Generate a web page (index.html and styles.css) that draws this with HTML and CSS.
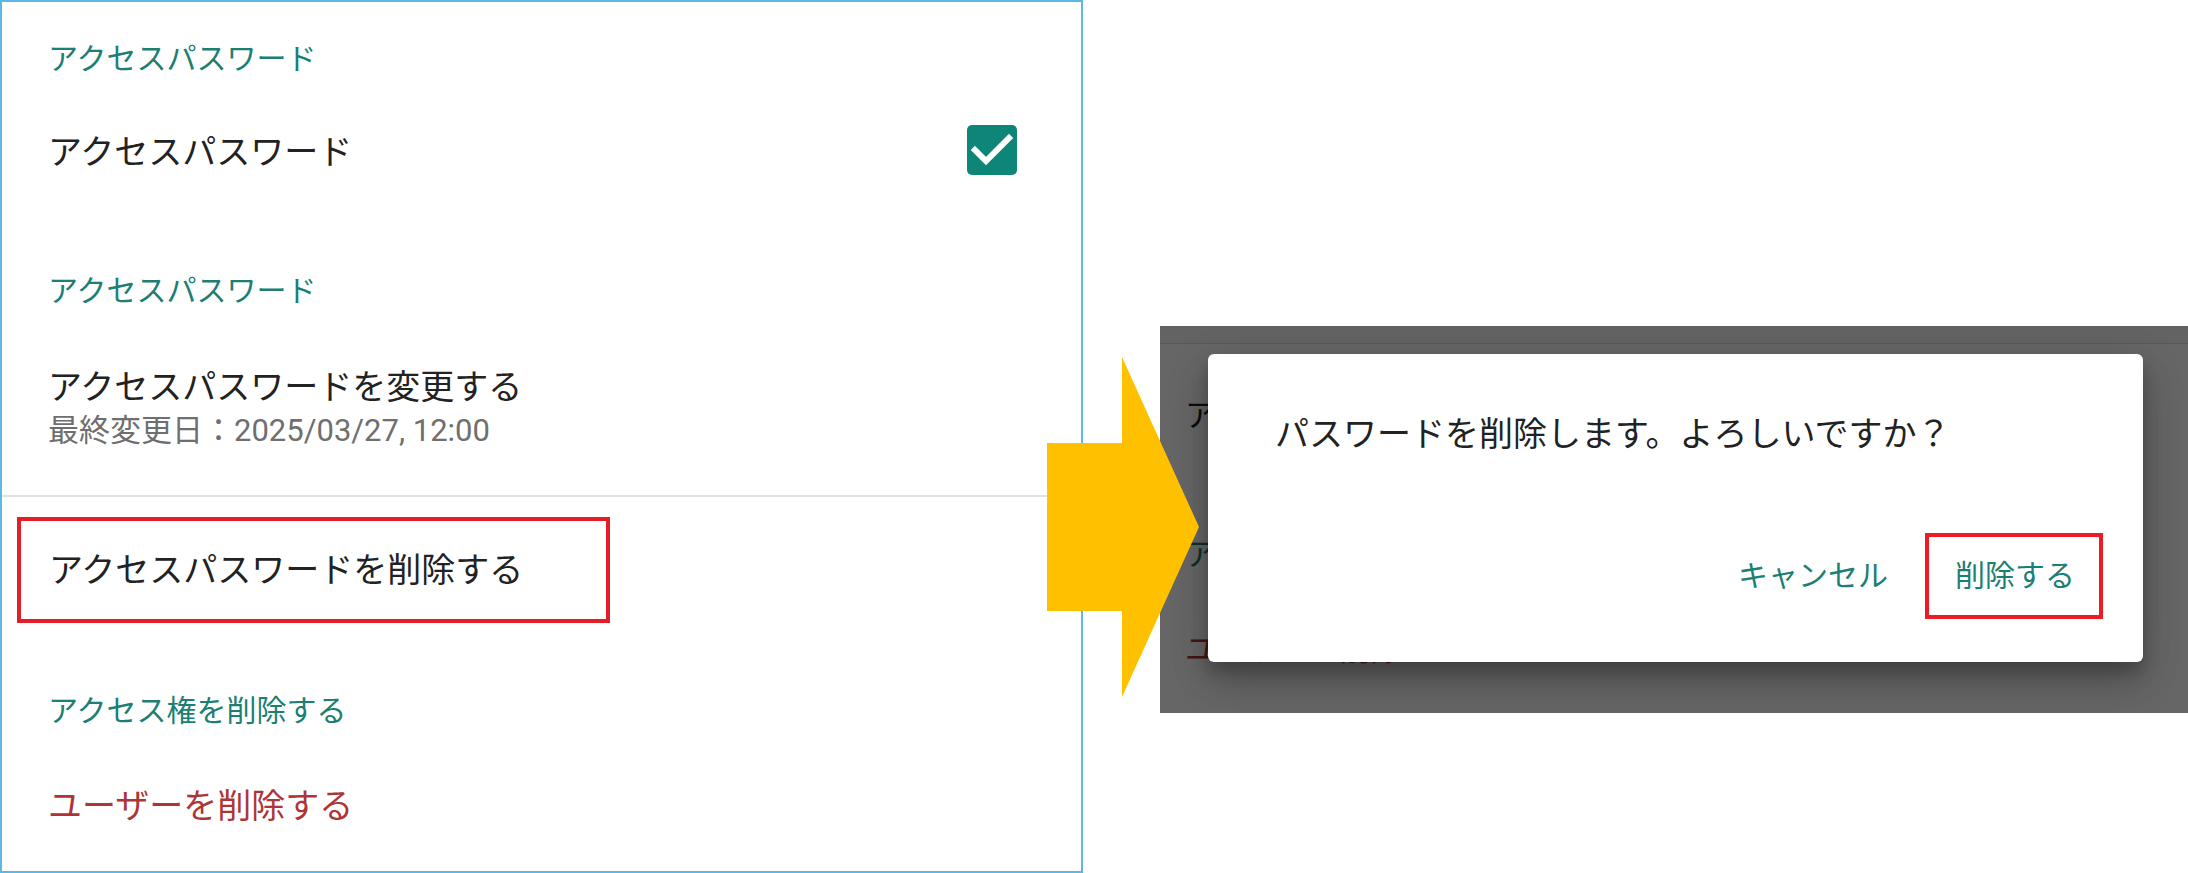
FILE: index.html
```html
<!DOCTYPE html>
<html lang="ja">
<head>
  <meta charset="UTF-8">
  <meta name="viewport" content="width=device-width, initial-scale=1.0">
  <title>アクセスパスワード</title>
  <link rel="stylesheet" href="styles.css">
</head>
<body>
  <div class="page">

    <section class="settings">
      <div class="category cat-first">アクセスパスワード</div>
      <div class="pref pref-switch">
        <span class="pref-title">アクセスパスワード</span>
        <span class="checkbox">
          <svg viewBox="0 0 50 50" width="50" height="50">
            <polyline points="8,25 19,36 42,13" fill="none" stroke="#fff" stroke-width="6" stroke-linecap="square"/>
          </svg>
        </span>
      </div>

      <div class="category cat-second">アクセスパスワード</div>
      <div class="pref pref-change">
        <div class="pref-title">アクセスパスワードを変更する</div>
        <div class="pref-summary">最終変更日：2025/03/27, 12:00</div>
      </div>

      <hr class="divider">

      <div class="pref pref-marked">アクセスパスワードを削除する</div>

      <div class="category cat-third">アクセス権を削除する</div>
      <div class="pref pref-danger">ユーザーを削除する</div>
    </section>

    <!-- 矢印 -->
    <div class="arrow">
      <svg viewBox="0 0 152 340" width="152" height="340">
        <polygon points="0,86 75,86 75,0 152,170 75,340 75,254 0,254" fill="#ffc000"/>
      </svg>
    </div>

    <div class="preview">
      <div class="screen">
        <div class="screen-bar"></div>
        <div class="screen-list">
          <div class="screen-item item-black">アクセスパスワードを削除する</div>
          <div class="screen-item item-teal">アクセス権を削除する</div>
          <div class="screen-item item-red">ユーザーを削除する</div>
        </div>

        <div class="dialog">
          <p class="dialog-msg">パスワードを削除します。よろしいですか？</p>
          <div class="dialog-actions">
            <button class="btn btn-cancel">キャンセル</button>
            <button class="btn btn-delete">削除する</button>
          </div>
        </div>
      </div>
    </div>

  </div>
</body>
</html>
```

FILE: styles.css
```css
body {
  margin: 0;
  background-color: #fff;
  font-family: Roboto, "Noto Sans CJK JP", sans-serif;
  color: #222;
  overflow: hidden;
}
.page {
  position: relative;
  display: flex;
  align-items: flex-start;
  width: 2188px;
  height: 873px;
}

/* 左: 設定画面 */
.settings {
  flex: none;
  width: 1083px;
  height: 873px;
  box-sizing: border-box;
  border: 2px solid #5cb8e6;
}
.category {
  padding-left: 46px;
  font-size: 30px;
  line-height: 40px;
  color: #1b7f73;
}
.cat-first {
  padding-top: 37px;
  padding-bottom: 21px;
}
.cat-second {
  padding-top: 71px;
}
.cat-third {
  padding-top: 68px;
}
.pref {
  padding-left: 46px;
  font-size: 34px;
  line-height: 46px;
}
.pref-switch {
  height: 100px;
  display: flex;
  align-items: center;
  justify-content: space-between;
  padding-right: 64px;
}
.pref-switch .pref-title {
  margin-top: 4px;
}
.checkbox {
  width: 50px;
  height: 50px;
  border-radius: 5px;
  background-color: #0d8677;
  display: flex;
}
.pref-change {
  padding-top: 53px;
  padding-bottom: 43px;
}
.pref-summary {
  font-size: 31px;
  line-height: 42px;
  color: #6f6f6f;
}
.divider {
  margin: 0;
  height: 2px;
  border: none;
  background-color: #e2e2e2;
}
.pref-marked {
  margin: 20px 0 0 15px;
  width: 593px;
  height: 106px;
  box-sizing: border-box;
  border: 4px solid #e31e26;
  padding-left: 28px;
  display: flex;
  align-items: center;
}
.pref-danger {
  padding-top: 52px;
  color: #ad3535;
}

/* 矢印 */
.arrow {
  position: absolute;
  left: 1047px;
  top: 357px;
  z-index: 3;
  line-height: 0;
}

/* 右: ダイアログ */
.preview {
  flex: 1;
  margin-left: 77px;
  padding-top: 326px;
}
.screen {
  position: relative;
  height: 387px;
  background-color: #fff;
  overflow: hidden;
}
.screen::after {
  content: '';
  position: absolute;
  top: 0;
  left: 0;
  right: 0;
  bottom: 0;
  background-color: rgba(0, 0, 0, 0.6);
}
.screen-bar {
  height: 17px;
  background-color: #f8f8f8;
  border-bottom: 1px solid #dcdcdc;
}
.screen-list {
  padding-left: 25px;
}
.screen-item {
  font-size: 31px;
  line-height: 40px;
  white-space: nowrap;
}
.item-black {
  margin-top: 52px;
}
.item-teal {
  margin-top: 99px;
  color: #1b7f73;
}
.item-red {
  margin-top: 55px;
  color: #ad3535;
}
.dialog {
  position: absolute;
  left: 48px;
  top: 28px;
  z-index: 2;
  width: 935px;
  height: 308px;
  background-color: #fff;
  border-radius: 6px;
  box-shadow: 0 11px 15px rgba(0, 0, 0, 0.2), 0 24px 38px rgba(0, 0, 0, 0.14), 0 9px 46px rgba(0, 0, 0, 0.12);
}
.dialog-msg {
  margin: 0;
  padding: 57px 0 0 67px;
  font-size: 34px;
  line-height: 46px;
  color: #222;
}
.dialog-actions {
  margin-top: 76px;
  padding-right: 40px;
  display: flex;
  justify-content: flex-end;
  align-items: center;
}
.btn {
  padding: 0;
  border: none;
  background: none;
  font-family: inherit;
  font-size: 30px;
  line-height: 40px;
  color: #1b7f73;
}
.btn-cancel {
  margin-right: 37px;
}
.btn-delete {
  height: 86px;
  box-sizing: border-box;
  border: 4px solid #ed1c24;
  padding: 0 24px 0 26px;
}
```
